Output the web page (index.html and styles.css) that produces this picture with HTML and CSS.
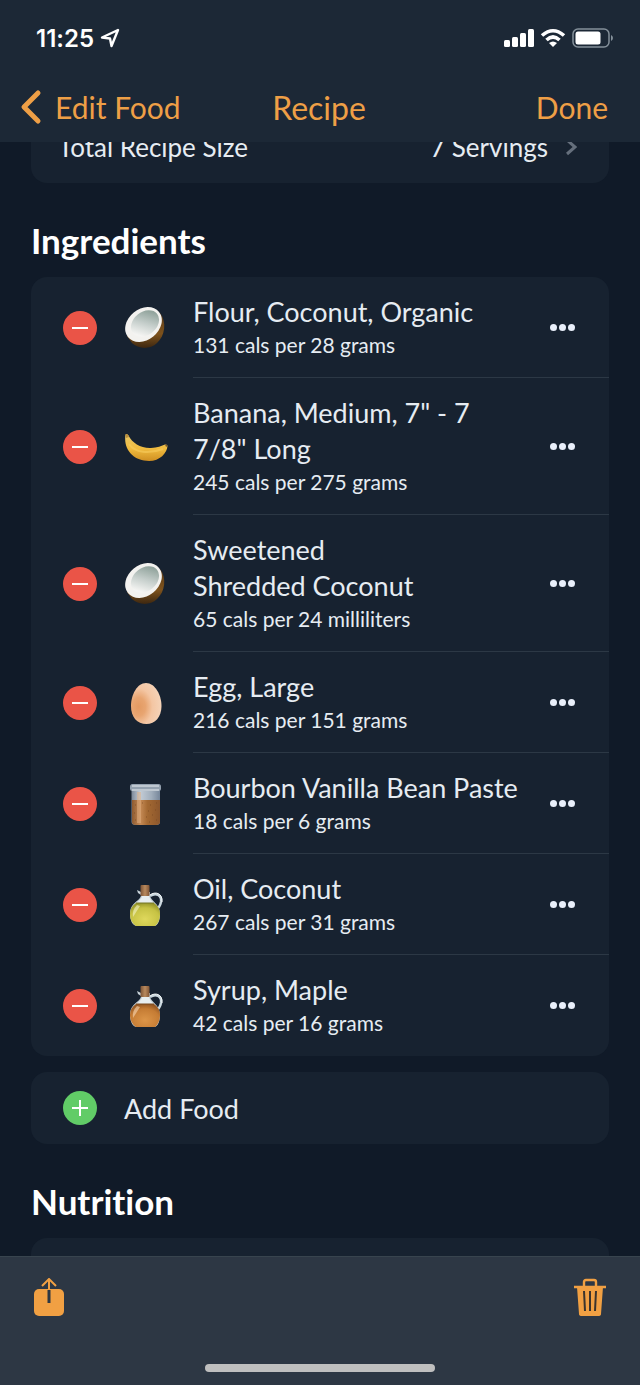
FILE: index.html
```html
<!DOCTYPE html>
<html lang="en">
<head>
  <meta charset="UTF-8" />
  <meta name="viewport" content="width=device-width, initial-scale=1.0" />
  <title>Recipe</title>
  <link rel="stylesheet" href="styles.css">
</head>
<body>
  <!-- Shared food icons -->
  <svg class="icon-defs" aria-hidden="true">
    <defs>
      <linearGradient id="shell" x1="0" y1="0" x2="0" y2="1">
        <stop offset="0" stop-color="#5a3c1a" /><stop offset="0.6" stop-color="#7d521c" /><stop offset="1" stop-color="#3d2710" />
      </linearGradient>
      <linearGradient id="flesh" x1="0.9" y1="0.3" x2="0.1" y2="0.7">
        <stop offset="0" stop-color="#93a59e" /><stop offset="0.5" stop-color="#c5cecb" /><stop offset="1" stop-color="#f4f4f2" />
      </linearGradient>
      <linearGradient id="peel" x1="0" y1="0" x2="0" y2="1">
        <stop offset="0" stop-color="#e8c868" /><stop offset="0.55" stop-color="#f0bb3e" /><stop offset="1" stop-color="#cf8f22" />
      </linearGradient>
      <radialGradient id="eggshell" cx="0.25" cy="0.58" r="0.75">
        <stop offset="0" stop-color="#e39a62" /><stop offset="0.3" stop-color="#e8a571" /><stop offset="0.6" stop-color="#f4c6a3" /><stop offset="1" stop-color="#f5d3b8" />
      </radialGradient>
      <linearGradient id="spice" x1="0" y1="0" x2="1" y2="0">
        <stop offset="0" stop-color="#8d5a30" /><stop offset="0.3" stop-color="#c58a55" /><stop offset="0.55" stop-color="#a46932" /><stop offset="1" stop-color="#8b562c" />
      </linearGradient>
      <linearGradient id="glass" x1="0" y1="0" x2="1" y2="0">
        <stop offset="0" stop-color="#7c8898" /><stop offset="0.3" stop-color="#c3ccd6" /><stop offset="0.7" stop-color="#a0adbb" /><stop offset="1" stop-color="#76869a" />
      </linearGradient>
      <linearGradient id="cork" x1="0" y1="0" x2="1" y2="0">
        <stop offset="0" stop-color="#7c5436" /><stop offset="0.5" stop-color="#b98a5e" /><stop offset="1" stop-color="#805535" />
      </linearGradient>
      <radialGradient id="oil" cx="0.5" cy="0.7" r="0.7">
        <stop offset="0" stop-color="#dfd85c" /><stop offset="0.7" stop-color="#c6c244" /><stop offset="1" stop-color="#98972a" />
      </radialGradient>
      <radialGradient id="syrup" cx="0.5" cy="0.7" r="0.7">
        <stop offset="0" stop-color="#dc9548" /><stop offset="0.7" stop-color="#c57c34" /><stop offset="1" stop-color="#955722" />
      </radialGradient>
    </defs>
    <symbol id="coconut" viewBox="0 0 44 44">
      <path d="M36 7C43 16 41 30 33 37C26 44 14 43 8 37L3 30Z" fill="url(#shell)" />
      <ellipse cx="19.500" cy="18.500" rx="20" ry="15.500" transform="rotate(-39 19.500 18.500)" fill="#f3f2ef" />
      <ellipse cx="21" cy="17.500" rx="15.500" ry="11.500" transform="rotate(-39 21 17.500)" fill="url(#flesh)" />
    </symbol>
    <symbol id="banana" viewBox="0 0 44 44">
      <path d="M1.500 9.500Q3 8 4.500 10.500C8 18 17 23.500 27 23C33 22.500 38 21 41 19.500Q43.500 19 43.500 21C43 28 36 36 25 36C10 36-1 25 1.500 9.500Z" fill="url(#peel)" />
      <path d="M5 19C11 28 25 29 39 24" fill="none" stroke="#f6cc5e" stroke-width="2" opacity=".6" />
      <path d="M1.500 9.500Q3 8 4.500 10.500L5 12L2 13Z" fill="#b98d3c" />
      <path d="M41 19.500Q43.500 19 43.500 21L42 22Z" fill="#76572b" />
    </symbol>
    <symbol id="egg" viewBox="0 0 44 44">
      <path d="M22 2C31 2 37.500 14 37.500 25C37.500 36 31 43 22.500 43C13 43 7 36 7 25C7 14 13 2 22 2Z" fill="url(#eggshell)" />
    </symbol>
    <symbol id="jar" viewBox="0 0 44 44">
      <path d="M7.500 8H36V40Q36 43 32 43H12Q7.500 43 7.500 40Z" fill="url(#glass)" />
      <path d="M8 18H36V40Q36 43 32 43H12Q8 43 8 40Z" fill="url(#spice)" />
      <path d="M11 23h1m6-2h1m7 2h1m5-2h1M24 29h1m6-1h1M22 35h1m5-2h1m3 5h1M10 31h1m0 7h1m13 2h1" stroke="#70431f" opacity=".6" />
      <path d="M15 10V41" stroke="#e2b284" stroke-width="4" opacity=".5" />
      <rect x="6" y="2" width="31" height="7" rx="2.500" fill="#94a1af" />
      <path d="M8 4H35M8 8H35" stroke="#ccd4dc" stroke-width="1.500" />
    </symbol>
    <g id="jug">
      <path d="M26 13C32 9 38 12 37 19C36 24 34 26 31 27" fill="none" stroke="#cbd8df" stroke-width="2.500" />
      <path d="M26 12C31 8 39 10 38 19" fill="none" stroke="#f3f7f8" stroke-width="1" />
      <path d="M17 9L13 7L14 10L17 12C17 18 6 19 6 31C6 38 9 43 13 43H30C34 43 36 37 36 31C36 20 26 18 26 12V9Z" fill="#c6d1d7" />
      <path d="M18 11V14Q16 18 12 20H30Q25 17 25 11Z" fill="#e8eef0" />
      <rect x="16.500" y="2" width="9" height="11" rx="1" fill="url(#cork)" />
    </g>
    <symbol id="oil-jug" viewBox="0 0 44 44">
      <use href="#jug" />
      <path d="M12 20H30Q36 24 36 31Q36 39 31 43H12Q6 39 6 31Q6 24 12 20Z" fill="url(#oil)" />
      <path d="M13 22Q8 27 9 34L16 23Z" fill="#f4f4c7" opacity=".6" />
      <path d="M12 20H30" stroke="#777929" />
    </symbol>
    <symbol id="syrup-jug" viewBox="0 0 44 44">
      <use href="#jug" />
      <path d="M12 20H30Q36 24 36 31Q36 39 31 43H12Q6 39 6 31Q6 24 12 20Z" fill="url(#syrup)" />
      <path d="M13 22Q8 27 9 34L16 23Z" fill="#f8d9b5" opacity=".6" />
      <path d="M12 20H30" stroke="#7d4c21" />
    </symbol>
  </svg>

  <div class="app">
    <header class="header">
      <div class="status-bar">
        <div class="status-time">
          <span>11:25</span>
          <svg width="20" height="20" viewBox="0 0 20 20" aria-hidden="true"><path d="M18 2L2 9.500L10 10.500L11.500 18Z" fill="none" stroke="#fff" stroke-width="2.400" stroke-linejoin="round" /></svg>
        </div>
        <div class="status-icons">
          <svg width="30" height="20" viewBox="0 0 30 20" aria-hidden="true"><g fill="#fff"><rect x="0" y="12" width="6" height="7" rx="1.500" /><rect x="8" y="9" width="6" height="10" rx="1.500" /><rect x="16" y="5" width="6" height="14" rx="1.500" /><rect x="24" y="1" width="6" height="18" rx="1.500" /></g></svg>
          <svg width="26" height="20" viewBox="0 0 26 20" aria-hidden="true"><g fill="none" stroke="#fff" stroke-width="3.600"><path d="M2 7.500Q13-2 24 7.500" /><path d="M6.500 12Q13 6 19.500 12" /></g><path d="M9 15Q13 12 17 15L13 19Z" fill="#fff" /></svg>
          <svg width="42" height="20" viewBox="0 0 42 20" aria-hidden="true"><rect x="1" y="1" width="36" height="18" rx="5" fill="none" stroke="#84909a" stroke-width="1.500" /><rect x="3.500" y="3.500" width="25" height="13" rx="2.500" fill="#fff" /><path d="M39 7Q41 8 41 10Q41 12 39 13Z" fill="#84909a" /></svg>
        </div>
      </div>
      <nav class="nav-bar">
        <button class="nav-btn back-btn">
          <svg width="22" height="36" viewBox="0 0 22 36" aria-hidden="true"><path d="M18 4L4 18L18 32" fill="none" stroke="currentColor" stroke-width="5" stroke-linecap="round" stroke-linejoin="round" /></svg>
          Edit Food
        </button>
        <h1 class="page-title">Recipe</h1>
        <button class="nav-btn done-btn">Done</button>
      </nav>
    </header>

    <main class="scroll-area">
      <div class="content">
        <button class="card size-row">
          <span class="size-label">Total Recipe Size</span>
          <span>7 Servings</span>
          <svg width="12" height="18" viewBox="0 0 12 18" aria-hidden="true"><path d="M2 2L10 9L2 16" fill="none" stroke="#656f7c" stroke-width="3" /></svg>
        </button>

        <h2 class="section-title">Ingredients</h2>
        <ul class="card ingredients">
          <li class="ingredient">
            <button class="round-btn remove-btn" aria-label="Remove"></button>
            <svg class="food-icon" aria-hidden="true"><use href="#coconut" /></svg>
            <div class="details">
              <div class="food-text"><div class="food-name">Flour, Coconut, Organic</div><div class="food-cals">131 cals per 28 grams</div></div>
              <button class="more-btn" aria-label="More"><i></i><i></i><i></i></button>
            </div>
          </li>
          <li class="ingredient">
            <button class="round-btn remove-btn" aria-label="Remove"></button>
            <svg class="food-icon" aria-hidden="true"><use href="#banana" /></svg>
            <div class="details">
              <div class="food-text"><div class="food-name">Banana, Medium, 7" - 7<br>7/8" Long</div><div class="food-cals">245 cals per 275 grams</div></div>
              <button class="more-btn" aria-label="More"><i></i><i></i><i></i></button>
            </div>
          </li>
          <li class="ingredient">
            <button class="round-btn remove-btn" aria-label="Remove"></button>
            <svg class="food-icon" aria-hidden="true"><use href="#coconut" /></svg>
            <div class="details">
              <div class="food-text"><div class="food-name">Sweetened<br>Shredded Coconut</div><div class="food-cals">65 cals per 24 milliliters</div></div>
              <button class="more-btn" aria-label="More"><i></i><i></i><i></i></button>
            </div>
          </li>
          <li class="ingredient">
            <button class="round-btn remove-btn" aria-label="Remove"></button>
            <svg class="food-icon" aria-hidden="true"><use href="#egg" /></svg>
            <div class="details">
              <div class="food-text"><div class="food-name">Egg, Large</div><div class="food-cals">216 cals per 151 grams</div></div>
              <button class="more-btn" aria-label="More"><i></i><i></i><i></i></button>
            </div>
          </li>
          <li class="ingredient">
            <button class="round-btn remove-btn" aria-label="Remove"></button>
            <svg class="food-icon" aria-hidden="true"><use href="#jar" /></svg>
            <div class="details">
              <div class="food-text"><div class="food-name">Bourbon Vanilla Bean Paste</div><div class="food-cals">18 cals per 6 grams</div></div>
              <button class="more-btn" aria-label="More"><i></i><i></i><i></i></button>
            </div>
          </li>
          <li class="ingredient">
            <button class="round-btn remove-btn" aria-label="Remove"></button>
            <svg class="food-icon" aria-hidden="true"><use href="#oil-jug" /></svg>
            <div class="details">
              <div class="food-text"><div class="food-name">Oil, Coconut</div><div class="food-cals">267 cals per 31 grams</div></div>
              <button class="more-btn" aria-label="More"><i></i><i></i><i></i></button>
            </div>
          </li>
          <li class="ingredient">
            <button class="round-btn remove-btn" aria-label="Remove"></button>
            <svg class="food-icon" aria-hidden="true"><use href="#syrup-jug" /></svg>
            <div class="details">
              <div class="food-text"><div class="food-name">Syrup, Maple</div><div class="food-cals">42 cals per 16 grams</div></div>
              <button class="more-btn" aria-label="More"><i></i><i></i><i></i></button>
            </div>
          </li>
        </ul>

        <button class="card add-row">
          <span class="round-btn add-icon"></span>
          <span>Add Food</span>
        </button>

        <h2 class="section-title">Nutrition</h2>
        <div class="card nutrition"></div>
      </div>
    </main>

    <footer class="toolbar">
      <div class="toolbar-btns">
        <button class="tool-btn" aria-label="Share">
          <svg width="30" height="40" viewBox="0 0 30 40" aria-hidden="true"><rect x="0" y="11" width="30" height="27" rx="5" fill="currentColor" /><path d="M15 12V25" stroke="#2d3743" stroke-width="3" /><path d="M15 12V2M8 8L15 1L22 8" fill="none" stroke="currentColor" stroke-width="2" /></svg>
        </button>
        <button class="tool-btn" aria-label="Delete">
          <svg width="32" height="40" viewBox="0 0 32 40" aria-hidden="true"><path d="M10 8V4Q10 2 12 2H20Q22 2 22 4V8M0 9H32" fill="none" stroke="currentColor" stroke-width="2.400" /><path d="M3 9H29L27 36Q27 38 24 38H8Q5 38 5 36Z" fill="currentColor" /><path d="M10 13L11 33M16 13V33M22 13L21 33" stroke="#3b342d" stroke-width="2" /></svg>
        </button>
      </div>
      <div class="home-bar"></div>
    </footer>
  </div>
</body>
</html>
```
FILE: styles.css
```css
/* Global Reset & Base Styles */
* { margin: 0; padding: 0; box-sizing: border-box; }
body {
  font-family: Lato, "Liberation Sans", sans-serif;
  font-variant-ligatures: none;
  background: #101a28;
  color: #e6ecf2;
}
button {
  font: inherit;
  color: inherit;
  background: none;
  border: none;
  cursor: pointer;
}
svg {
  display: block;
  flex: none;
}
.icon-defs {
  position: absolute;
  width: 0;
  height: 0;
}
.app {
  display: flex;
  flex-direction: column;
  height: 100vh;
}
/* Header */
.header {
  background: #1c2836;
}
.status-bar {
  display: flex;
  align-items: center;
  justify-content: space-between;
  height: 72px;
  padding: 4px 26px 0 36px;
}
.status-time {
  display: flex;
  align-items: center;
  gap: 6px;
  font-family: Inter, sans-serif;
  font-size: 24px;
  font-weight: 600;
  color: #fff;
}
.status-icons {
  display: flex;
  gap: 6px;
}
.nav-bar {
  display: grid;
  grid-template-columns: 1fr auto 1fr;
  align-items: center;
  height: 70px;
  padding: 0 32px 0 20px;
  color: #ee9f46;
}
.nav-btn {
  font-size: 30px;
}
.back-btn {
  display: flex;
  align-items: center;
  gap: 13px;
}
.done-btn {
  justify-self: end;
}
.page-title {
  padding-left: 10px;
  font-size: 32px;
  font-weight: 400;
}
/* Scrolling content, starts partly under the header */
.scroll-area {
  flex: 1;
  min-height: 0;
  overflow: hidden;
}
.content {
  margin-top: -31px;
  padding: 0 31px;
}
.card {
  width: 100%;
  background: #172230;
  border-radius: 16px;
}
.size-row {
  display: flex;
  align-items: center;
  gap: 17px;
  height: 72px;
  padding: 0 32px 0 27px;
  font-size: 26px;
}
.size-label {
  flex: 1;
  text-align: left;
}
.section-title {
  padding: 36px 0 16px;
  font-size: 35px;
  line-height: 42px;
  font-weight: 700;
  color: #fff;
}
/* Ingredients */
.ingredients {
  list-style: none;
}
.ingredient {
  display: flex;
  align-items: center;
  padding-left: 32px;
}
.round-btn {
  flex: none;
  display: grid;
  place-items: center;
  width: 34px;
  height: 34px;
  border-radius: 50%;
}
.remove-btn {
  background: #ea5447;
}
.remove-btn::before,
.add-icon::before,
.add-icon::after {
  content: "";
  grid-area: 1 / 1;
  width: 16px;
  height: 2px;
  background: #fff;
}
.food-icon {
  width: 44px;
  height: 44px;
  margin: 0 25px 0 27px;
}
.details {
  flex: 1;
  display: flex;
  align-items: center;
  justify-content: space-between;
  padding: 17px 34px 17px 0;
  border-bottom: 1px solid #2c3845;
}
.ingredient:last-child .details {
  border-color: transparent;
}
.food-name {
  font-size: 27px;
  line-height: 36px;
}
.food-cals {
  font-size: 21px;
  line-height: 30px;
}
.more-btn {
  display: flex;
  gap: 2px;
}
.more-btn i {
  width: 7px;
  height: 7px;
  border-radius: 50%;
  background: #e9effa;
}
/* Add Food */
.add-row {
  display: flex;
  align-items: center;
  gap: 27px;
  height: 72px;
  margin-top: 16px;
  padding-left: 32px;
  font-size: 27px;
}
.add-icon {
  background: #61cc67;
}
.add-icon::after {
  width: 2px;
  height: 16px;
}
.nutrition {
  height: 72px;
}
/* Bottom toolbar */
.toolbar {
  background: #2d3744;
  border-top: 1px solid #38444e;
}
.toolbar-btns {
  display: flex;
  justify-content: space-between;
  padding: 21px 34px 46px;
}
.tool-btn {
  color: #f1a043;
}
.home-bar {
  width: 36%;
  height: 8px;
  margin: 0 auto 13px;
  border-radius: 4px;
  background: #bfbfbf;
}
```
